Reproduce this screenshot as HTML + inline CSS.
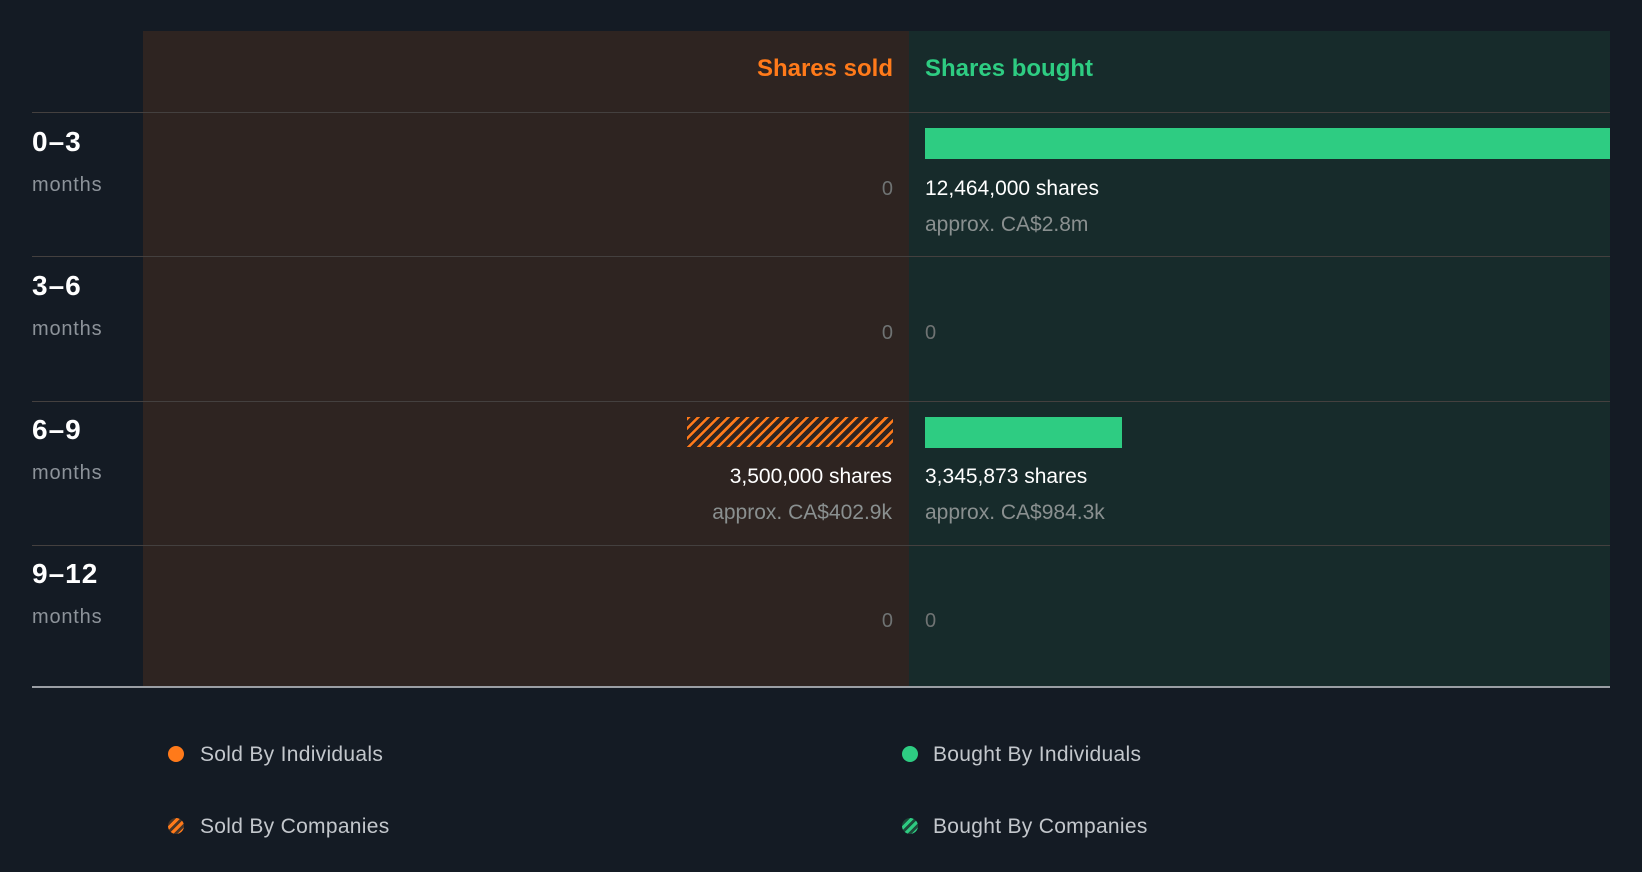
<!DOCTYPE html>
<html><head><style>
body{margin:0;width:1642px;height:872px;background:#141b24;font-family:"Liberation Sans",sans-serif;position:relative;overflow:hidden}
.a{position:absolute}
.l{background:#2e2421;left:143px;top:31px;width:766px;height:656px}
.r{background:#172b2b;left:909px;top:31px;width:701px;height:656px}
.h{height:1px;left:32px;width:1578px;background:#44403f}
.lab{left:32px;color:#fff;font-weight:bold;font-size:28px;letter-spacing:1px}
.mo{left:32px;color:#8d939a;font-size:20px;letter-spacing:0.8px}
.z{color:#6f7373;font-size:20px}
.s{color:#fff;font-size:21px}
.ap{color:#8a9090;font-size:21px}
.leg{color:#c3c7cc;font-size:21px;letter-spacing:0.3px}
.dot{width:16px;height:16px;border-radius:50%}
</style></head><body>
<div class="a l"></div><div class="a r"></div>
<div class="a" style="right:749px;top:55px;color:#ff7a1a;font-weight:bold;font-size:24px">Shares sold</div>
<div class="a" style="left:925px;top:55px;color:#2ecc82;font-weight:bold;font-size:24px">Shares bought</div>
<div class="a h" style="top:112px"></div>
<div class="a h" style="top:256px"></div>
<div class="a h" style="top:401px"></div>
<div class="a h" style="top:545px"></div>
<div class="a" style="left:32px;top:686px;width:1578px;height:2px;background:#9a9ea4"></div>

<div class="a lab" style="top:126px">0–3</div><div class="a mo" style="top:174px">months</div>
<div class="a lab" style="top:270px">3–6</div><div class="a mo" style="top:318px">months</div>
<div class="a lab" style="top:414px">6–9</div><div class="a mo" style="top:462px">months</div>
<div class="a lab" style="top:558px">9–12</div><div class="a mo" style="top:606px">months</div>

<div class="a" style="left:925px;top:128px;width:685px;height:31px;background:#2ecc82"></div>
<div class="a z" style="right:749px;top:178px">0</div>
<div class="a s" style="left:925px;top:177px">12,464,000 shares</div>
<div class="a ap" style="left:925px;top:213px">approx. CA$2.8m</div>

<div class="a z" style="right:749px;top:322px">0</div>
<div class="a z" style="left:925px;top:322px">0</div>

<div class="a" style="left:687px;top:417px;width:206px;height:30px;background:repeating-linear-gradient(135deg,#ff7a1a 0 2.5px,transparent 2.5px 7px)"></div>
<div class="a" style="left:925px;top:417px;width:197px;height:31px;background:#2ecc82"></div>
<div class="a s" style="right:750px;top:465px">3,500,000 shares</div>
<div class="a ap" style="right:750px;top:501px">approx. CA$402.9k</div>
<div class="a s" style="left:925px;top:465px">3,345,873 shares</div>
<div class="a ap" style="left:925px;top:501px">approx. CA$984.3k</div>

<div class="a z" style="right:749px;top:610px">0</div>
<div class="a z" style="left:925px;top:610px">0</div>

<div class="a dot" style="left:168px;top:746px;background:#ff7a1a"></div>
<div class="a leg" style="left:200px;top:743px">Sold By Individuals</div>
<div class="a dot" style="left:168px;top:818px;background:repeating-linear-gradient(135deg,#ff7a1a 0 3px,#4a3526 3px 6px)"></div>
<div class="a leg" style="left:200px;top:815px">Sold By Companies</div>
<div class="a dot" style="left:902px;top:746px;background:#2ecc82"></div>
<div class="a leg" style="left:933px;top:743px">Bought By Individuals</div>
<div class="a dot" style="left:902px;top:818px;background:repeating-linear-gradient(135deg,#2ecc82 0 3px,#1d4a3a 3px 6px)"></div>
<div class="a leg" style="left:933px;top:815px">Bought By Companies</div>
</body></html>
